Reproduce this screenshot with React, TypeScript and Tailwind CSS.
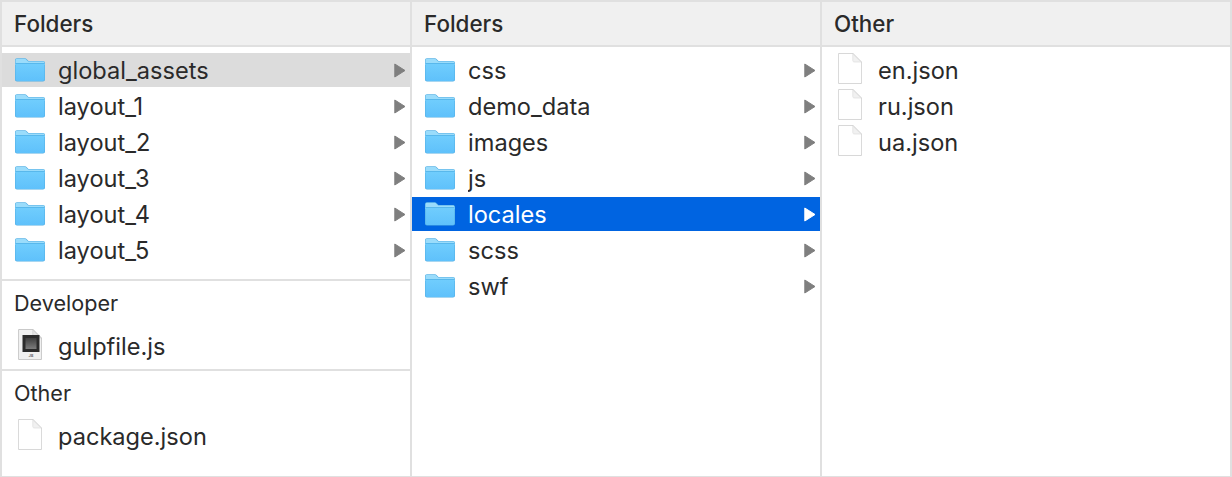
import React from 'react'

const Folder = () => (
  <svg width="32" height="26" viewBox="1 0 32 26" className="shrink-0">
    <defs>
      <linearGradient id="folderBody" x1="0" y1="0" x2="0" y2="1">
        <stop offset="0" stopColor="#70cdfd" />
        <stop offset="1" stopColor="#5fc1fb" />
      </linearGradient>
    </defs>
    <path d="M1 22.5V3.2C1 2 1.8 1.2 3 1.2h7.5c1 0 1.5.3 2.2 1l1.8 1.8H29c1.2 0 2 .8 2 2v16.5c0 1.2-.8 2-2 2H3c-1.2 0-2-.8-2-2z" fill="#52ade2" />
    <path d="M1.5 8V3.4c0-1 .6-1.6 1.6-1.6h7.3c.9 0 1.3.3 1.9.9l1.9 1.9H29c1 0 1.5.6 1.5 1.6V8z" fill="#9adcfb" />
    <path d="M1.5 22.3V6.8h29v15.5c0 1-.6 1.7-1.6 1.7H3.1c-1 0-1.6-.7-1.6-1.7z" fill="url(#folderBody)" />
    <rect x="1.5" y="6" width="29" height="1" fill="#58b8ec" />
  </svg>
)

const Doc = () => (
  <svg width="32" height="34" viewBox="0 1 32 34" className="shrink-0">
    <path d="M4.5 1H18L27 10V30.5c0 .9-.5 1.5-1.5 1.5h-21c-1 0-1.5-.6-1.5-1.5V2.5C3 1.6 3.5 1 4.5 1z" fill="#cbcbcb" />
    <path d="M4.5 1.7h13.2l8.6 8.6v20.2c0 .5-.3.8-.8.8h-21c-.5 0-.8-.3-.8-.8V2.5c0-.5.3-.8.8-.8z" fill="#fff" />
    <path d="M17.8 2v6.4c0 1 .6 1.6 1.6 1.6h6.6z" fill="#f1f1f1" stroke="#dcdcdc" strokeWidth="0.7" />
  </svg>
)

const JsDoc = () => (
  <svg width="32" height="34" viewBox="0 1 32 34" className="shrink-0">
    <defs>
      <linearGradient id="jsScreen" x1="0" y1="0" x2="0" y2="1">
        <stop offset="0" stopColor="#3f3f3f" />
        <stop offset="1" stopColor="#7c7c7c" />
      </linearGradient>
    </defs>
    <path d="M4.5 1H18L27 10V30.5c0 .9-.5 1.5-1.5 1.5h-21c-1 0-1.5-.6-1.5-1.5V2.5C3 1.6 3.5 1 4.5 1z" fill="#bdbdbd" />
    <path d="M4.5 1.7h13.2l8.6 8.6v20.2c0 .5-.3.8-.8.8h-21c-.5 0-.8-.3-.8-.8V2.5c0-.5.3-.8.8-.8z" fill="#f0f0f0" />
    <path d="M17.8 2v6.4c0 1 .6 1.6 1.6 1.6h6.6z" fill="#e4e4e4" stroke="#cdcdcd" strokeWidth="0.7" />
    <rect x="7.5" y="7" width="17" height="17" fill="#2b2b2b" />
    <rect x="10.5" y="10" width="11" height="11" fill="url(#jsScreen)" />
    <text x="16" y="29.2" textAnchor="middle" fontSize="4" fontWeight="700" fill="#666666">JS</text>
  </svg>
)

const Chevron = ({ light }: { light?: boolean }) => (
  <svg width="12" height="15" viewBox="0 0 12 15" className="shrink-0">
    <path
      d="M0.8 1L11 7.5L0.8 14z"
      fill={light ? '#ffffff' : '#7f7f7f'}
      stroke={light ? '#ffffff' : '#7f7f7f'}
      strokeWidth="1"
      strokeLinejoin="round"
    />
  </svg>
)

type RowProps = {
  name: string
  kind: 'folder' | 'doc' | 'js'
  state?: 'active' | 'selected'
}

const Row = ({ name, kind, state }: RowProps) => (
  <div
    className={`h-[34px] flex items-center pl-[13px] pr-[4px] mb-[2px]
      ${state === 'active' ? 'bg-[#0064e1] text-white' : ''}
      ${state === 'selected' ? 'bg-[#dcdcdc]' : ''}`}
  >
    {kind === 'folder' && <Folder />}
    {kind === 'doc' && <Doc />}
    {kind === 'js' && <JsDoc />}
    <span className="ml-[11px] pt-[2px] flex-1 truncate">{name}</span>
    {kind === 'folder' && <Chevron light={state === 'active'} />}
  </div>
)

const Header = ({ title }: { title: string }) => (
  <div className="h-[43px] shrink-0 flex items-center px-[12px] bg-[#f0f0f0] border-b-2 border-[#e0e0e0] box-content text-[22.4px] font-medium">
    {title}
  </div>
)

const SectionTitle = ({ title }: { title: string }) => (
  <div className="text-[21.6px] pl-[12px] h-[36px] mb-[8px] flex items-center">{title}</div>
)

const folders1 = ['global_assets', 'layout_1', 'layout_2', 'layout_3', 'layout_4', 'layout_5']
const folders2 = ['css', 'demo_data', 'images', 'js', 'locales', 'scss', 'swf']
const others = ['en.json', 'ru.json', 'ua.json']

export default function App() {
  return (
    <div className="w-[1232px] h-[477px] overflow-hidden bg-white border-x-2 border-t-2 border-b border-[#e0e0e0] grid grid-cols-[410px_410px_408px] font-['Inter',sans-serif] text-[23.6px] text-[#2a2a2a]">
      <div className="flex flex-col min-w-0 border-r-2 border-[#e0e0e0]">
        <Header title="Folders" />
        <div className="pt-[6px] pb-[10px] border-b-2 border-[#e0e0e0]">
          {folders1.map((f, i) => (
            <Row key={f} name={f} kind="folder" state={i === 0 ? 'selected' : undefined} />
          ))}
        </div>
        <div className="pt-[4px] pb-[4px] border-b-2 border-[#e0e0e0]">
          <SectionTitle title="Developer" />
          <Row name="gulpfile.js" kind="js" />
        </div>
        <div className="pt-[4px]">
          <SectionTitle title="Other" />
          <Row name="package.json" kind="doc" />
        </div>
      </div>
      <div className="flex flex-col min-w-0 border-r-2 border-[#e0e0e0]">
        <Header title="Folders" />
        <div className="pt-[6px]">
          {folders2.map(f => (
            <Row key={f} name={f} kind="folder" state={f === 'locales' ? 'active' : undefined} />
          ))}
        </div>
      </div>
      <div className="flex flex-col min-w-0">
        <Header title="Other" />
        <div className="pt-[6px]">
          {others.map(f => (
            <Row key={f} name={f} kind="doc" />
          ))}
        </div>
      </div>
    </div>
  )
}
